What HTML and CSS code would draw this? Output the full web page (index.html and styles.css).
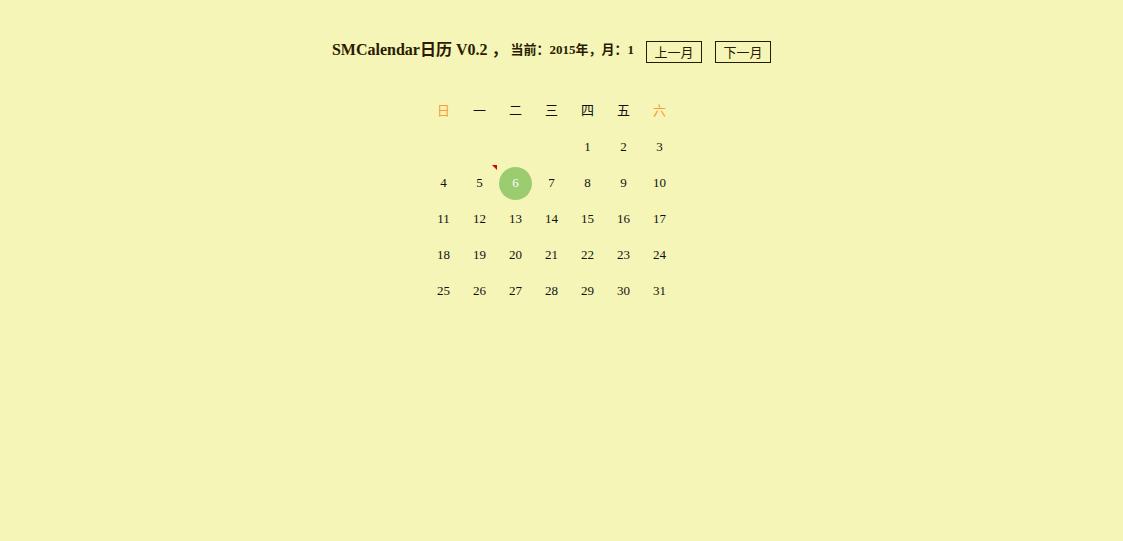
FILE: index.html
```html
<!DOCTYPE html>
<html lang="zh">
<head>
<meta charset="utf-8">
<title>SMCalendar</title>
<link rel="stylesheet" href="styles.css">
</head>
<body>
<div class="page">
  <header class="bar">
    <h2 class="title">SMCalendar日历 V0.2 ，</h2>
    <span class="current">当前：2015年，月：1</span>
    <button class="btn">上一月</button>
    <button class="btn">下一月</button>
  </header>
  <div class="cal">
    <div class="cell wk weekend">日</div>
    <div class="cell wk">一</div>
    <div class="cell wk">二</div>
    <div class="cell wk">三</div>
    <div class="cell wk">四</div>
    <div class="cell wk">五</div>
    <div class="cell wk weekend">六</div>

    <div class="cell"></div><div class="cell"></div><div class="cell"></div><div class="cell"></div>
    <div class="cell">1</div><div class="cell">2</div><div class="cell">3</div>

    <div class="cell">4</div>
    <div class="cell marked">5</div>
    <div class="cell"><span class="today">6</span></div>
    <div class="cell">7</div><div class="cell">8</div><div class="cell">9</div><div class="cell">10</div>

    <div class="cell">11</div><div class="cell">12</div><div class="cell">13</div><div class="cell">14</div><div class="cell">15</div><div class="cell">16</div><div class="cell">17</div>
    <div class="cell">18</div><div class="cell">19</div><div class="cell">20</div><div class="cell">21</div><div class="cell">22</div><div class="cell">23</div><div class="cell">24</div>
    <div class="cell">25</div><div class="cell">26</div><div class="cell">27</div><div class="cell">28</div><div class="cell">29</div><div class="cell">30</div><div class="cell">31</div>
  </div>
</div>
</body>
</html>
```
FILE: styles.css
```css
html, body {
  margin: 0;
  height: 100%;
  background: #f5f5b8;
}
body {
  font-family: "Liberation Serif", "Noto Sans CJK SC", serif;
  color: #2a1c00;
}
.page {
  width: 1103px;
  padding-top: 40px;
  display: flex;
  flex-direction: column;
  align-items: center;
}
.bar {
  display: flex;
  align-items: center;
  height: 24px;
}
.title {
  margin: 0 0 5px;
  font-size: 16px;
  line-height: 18px;
  font-weight: bold;
  white-space: pre;
}
.current {
  margin: 0 0 5px 3px;
  font-size: 13px;
  line-height: 16px;
  font-weight: bold;
}
.btn {
  margin-left: 13px;
  width: 56px;
  height: 22px;
  padding: 0;
  border: 1px solid #2a1c00;
  background: transparent;
  color: #2a1c00;
  font-family: "Noto Sans CJK SC", sans-serif;
  font-size: 13px;
  line-height: 20px;
}
.bar .current + .btn {
  margin-left: 12px;
}
.cal {
  margin-top: 29px;
  display: grid;
  grid-template-columns: repeat(7, 36px);
  grid-auto-rows: 36px;
}
.cell {
  position: relative;
  display: flex;
  align-items: center;
  justify-content: center;
  font-size: 13px;
  color: #111;
}
.wk {
  padding-bottom: 4px;
  box-sizing: border-box;
  font-family: "Noto Sans CJK SC", sans-serif;
  color: #111;
}
.wk.weekend {
  color: #ff9a2e;
}
.marked::after {
  content: "";
  position: absolute;
  top: 0;
  right: 1px;
  width: 0;
  height: 0;
  border-top: 5px solid #e00000;
  border-left: 5px solid transparent;
}
.today {
  width: 33px;
  height: 33px;
  border-radius: 50%;
  background: #9ccc70;
  color: #fff;
  display: flex;
  align-items: center;
  justify-content: center;
}
```
